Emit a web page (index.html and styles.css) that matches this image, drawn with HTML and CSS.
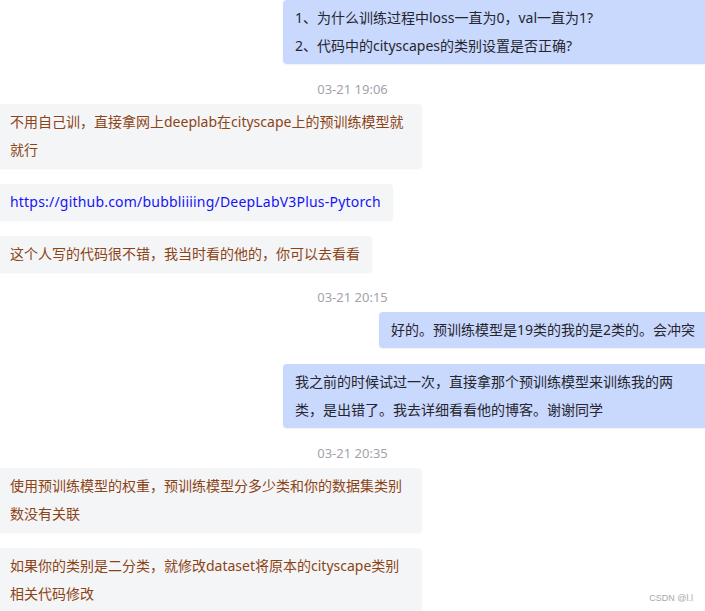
FILE: index.html
```html
<!DOCTYPE html>
<html lang="zh-CN">
<head>
<meta charset="utf-8">
<title>评论</title>
<link rel="stylesheet" href="styles.css">
</head>
<body>
<div class="chat">
  <div class="msg right wide">1、为什么训练过程中loss一直为0，val一直为1?<br>2、代码中的cityscapes的类别设置是否正确?</div>
  <div class="time">03-21 19:06</div>
  <div class="msg left wide">不用自己训，直接拿网上deeplab在cityscape上的预训练模型就<br>就行</div>
  <div class="msg left"><span class="link">https://github.com/bubbliiiing/DeepLabV3Plus-Pytorch</span></div>
  <div class="msg left">这个人写的代码很不错，我当时看的他的，你可以去看看</div>
  <div class="time">03-21 20:15</div>
  <div class="msg right">好的。预训练模型是19类的我的是2类的。会冲突</div>
  <div class="msg right wide">我之前的时候试过一次，直接拿那个预训练模型来训练我的两<br>类，是出错了。我去详细看看他的博客。谢谢同学</div>
  <div class="time">03-21 20:35</div>
  <div class="msg left wide">使用预训练模型的权重，预训练模型分多少类和你的数据集类别<br>数没有关联</div>
  <div class="msg left wide">如果你的类别是二分类，就修改dataset将原本的cityscape类别<br>相关代码修改</div>
</div>
<div class="watermark">CSDN @l.l</div>
</body>
</html>
```

FILE: styles.css
```css
html, body {
  margin: 0;
  padding: 0;
  background: #ffffff;
  overflow: hidden;
  height: 611px;
}

body {
  font-family: "Noto Sans", "Noto Sans CJK SC", sans-serif;
  font-size: 14px;
  position: relative;
}

.chat {
  display: flex;
  flex-direction: column;
  margin: 0 -2px;
}

.msg {
  box-sizing: border-box;
  max-width: 424px;
  padding: 4px 12px;
  line-height: 28px;
  border-radius: 4px;
  margin-bottom: 16px;
  white-space: nowrap;
  box-shadow: 0 1px 2px rgba(0, 0, 0, 0.06);
}

.msg.wide {
  width: 424px;
}

.msg.left {
  align-self: flex-start;
  background: #f4f5f7;
  color: #8c4416;
}

.msg.right {
  align-self: flex-end;
  background: #c9d8fd;
  color: #26262e;
}

.link {
  color: #1414f5;
  letter-spacing: 0.2px;
}

.time {
  align-self: center;
  font-size: 13px;
  line-height: 18px;
  color: #a3a3ab;
  margin-bottom: 6px;
}

.watermark {
  position: absolute;
  right: 12px;
  bottom: 8px;
  font-family: "Liberation Sans", sans-serif;
  font-size: 9px;
  color: #a8a8a8;
  text-shadow: 0 0 2px #ffffff;
}
```
